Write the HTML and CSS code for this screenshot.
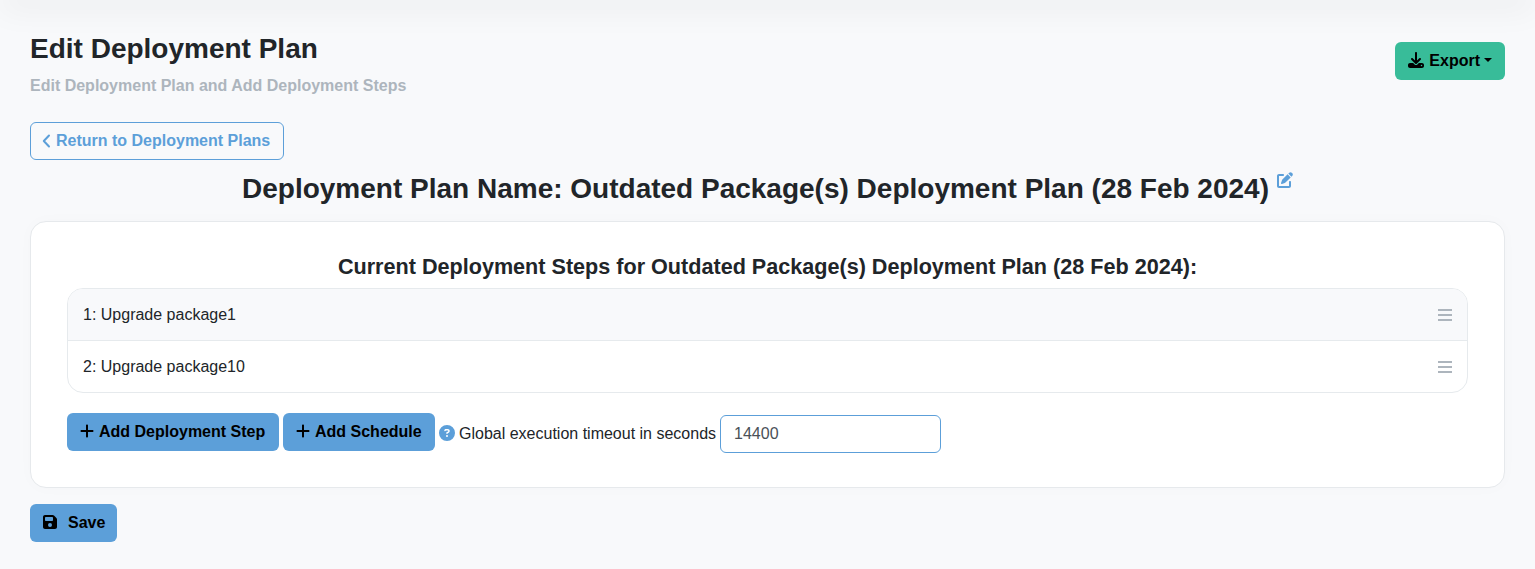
FILE: index.html
```html
<!DOCTYPE html>
<html lang="en">
<head>
<meta charset="utf-8">
<title>Edit Deployment Plan</title>
<link rel="stylesheet" href="styles.css">
</head>
<body>
<div class="topbar"></div>
<main class="page">
  <header class="page-header">
    <div>
      <h1 class="title">Edit Deployment Plan</h1>
      <p class="subtitle">Edit Deployment Plan and Add Deployment Steps</p>
    </div>
    <button class="btn btn-export">
      <svg class="icon icon-download" viewBox="0 0 512 512"><path d="M288 32c0-17.700-14.300-32-32-32s-32 14.300-32 32v242.700l-73.400-73.400c-12.500-12.500-32.800-12.500-45.300 0s-12.500 32.800 0 45.300l128 128c12.500 12.500 32.800 12.500 45.300 0l128-128c12.500-12.500 12.500-32.800 0-45.300s-32.800-12.500-45.300 0L288 274.700V32zM64 352c-35.300 0-64 28.700-64 64v32c0 35.300 28.700 64 64 64h384c35.300 0 64-28.700 64-64v-32c0-35.300-28.700-64-64-64H346.500l-45.300 45.300c-25 25-65.500 25-90.500 0L165.500 352H64zm368 56a24 24 0 1 1 0 48 24 24 0 1 1 0-48z"/></svg>
      <span>Export</span>
      <span class="caret"></span>
    </button>
  </header>
  <a class="btn btn-outline">
    <svg class="icon icon-chevron" viewBox="0 0 9 14"><path d="M7 1.500 1.800 7 7 12.500"/></svg>
    <span>Return to Deployment Plans</span>
  </a>
  <h2 class="plan-name">
    <span>Deployment Plan Name: Outdated Package(s) Deployment Plan (28 Feb 2024)</span>
    <svg class="icon icon-edit" viewBox="0 0 512 512"><path d="M471.600 21.700c-21.900-21.900-57.300-21.900-79.200 0L362.300 51.700l97.900 97.900 30.100-30.100c21.900-21.900 21.900-57.300 0-79.200L471.600 21.700zm-299.200 220c-6.100 6.100-10.800 13.600-13.500 21.900l-29.600 88.800c-2.900 8.600-.6 18.100 5.800 24.600s15.900 8.700 24.600 5.800l88.800-29.600c8.200-2.700 15.700-7.400 21.900-13.500L437.700 172.300 339.700 74.300 172.400 241.700zM64 64C28 64 0 92 0 128v320c0 36 28 64 64 64h320c36 0 64-28 64-64V320c0-17.700-14.300-32-32-32s-32 14.300-32 32v128H64V128h128c17.700 0 32-14.300 32-32s-14.300-32-32-32H64z"/></svg>
  </h2>
  <section class="card">
    <h3 class="steps-title">Current Deployment Steps for Outdated Package(s) Deployment Plan (28 Feb 2024):</h3>
    <ol class="steps">
      <li class="step step-shaded"><span>1: Upgrade package1</span><span class="handle"></span></li>
      <li class="step"><span>2: Upgrade package10</span><span class="handle"></span></li>
    </ol>
    <div class="actions">
      <button class="btn btn-primary btn-step">
        <svg class="icon icon-plus" viewBox="0 0 448 512"><path d="M256 80c0-17.700-14.300-32-32-32s-32 14.300-32 32v144H48c-17.700 0-32 14.300-32 32s14.300 32 32 32h144v144c0 17.700 14.300 32 32 32s32-14.300 32-32V288h144c17.700 0 32-14.300 32-32s-14.300-32-32-32H256V80z"/></svg>
        <span>Add Deployment Step</span>
      </button>
      <button class="btn btn-primary btn-schedule">
        <svg class="icon icon-plus" viewBox="0 0 448 512"><path d="M256 80c0-17.700-14.300-32-32-32s-32 14.300-32 32v144H48c-17.700 0-32 14.300-32 32s14.300 32 32 32h144v144c0 17.700 14.300 32 32 32s32-14.300 32-32V288h144c17.700 0 32-14.300 32-32s-14.300-32-32-32H256V80z"/></svg>
        <span>Add Schedule</span>
      </button>
      <label class="timeout">
        <svg class="icon icon-help" viewBox="0 0 512 512"><path d="M256 512A256 256 0 1 0 256 0a256 256 0 1 0 0 512zM169.800 165.300c7.900-22.300 29.100-37.300 52.800-37.300h58.300c34.900 0 63.100 28.300 63.100 63.100 0 22.600-12.100 43.500-31.700 54.800L280 264.400c-.2 13-10.900 23.600-24 23.600-13.300 0-24-10.700-24-24v-13.500c0-8.600 4.600-16.500 12.100-20.800l44.300-25.400c4.700-2.700 7.600-7.700 7.600-13.100 0-8.400-6.800-15.100-15.100-15.100h-58.300c-3.400 0-6.400 2.100-7.500 5.300l-.4 1.200c-4.400 12.500-18.200 19-30.600 14.600s-19-18.200-14.600-30.600l.4-1.200zM224 352a32 32 0 1 1 64 0 32 32 0 1 1-64 0z"/></svg>
        <span>Global execution timeout in seconds</span>
        <input class="input" type="text" value="14400">
      </label>
    </div>
  </section>
  <button class="btn btn-primary btn-save">
    <svg class="icon icon-save" viewBox="0 0 448 512"><path d="M64 32C28.700 32 0 60.700 0 96v320c0 35.300 28.700 64 64 64h320c35.300 0 64-28.700 64-64V173.300c0-17-6.700-33.300-18.700-45.300L352 50.700C340 38.700 323.700 32 306.700 32H64zm0 96c0-17.700 14.300-32 32-32h192c17.700 0 32 14.300 32 32v64c0 17.700-14.300 32-32 32H96c-17.700 0-32-14.300-32-32v-64zM224 288a64 64 0 1 1 0 128 64 64 0 1 1 0-128z"/></svg>
    <span>Save</span>
  </button>
</main>
</body>
</html>
```
FILE: styles.css
```css
* { box-sizing: border-box; }
body {
  margin: 0;
  height: 569px;
  overflow: hidden;
  background: #f8f9fb;
  color: #212529;
  font: 16px/24px "Liberation Sans", Arial, sans-serif;
}
h1, h2, h3, p, ol { margin: 0; padding: 0; }
.topbar {
  height: 16px;
  margin-top: -16px;
  box-shadow: 0 8px 32px rgba(0, 0, 0, .07);
}
.page { padding: 32px 30px 0; }
.page-header {
  display: flex;
  justify-content: space-between;
  align-items: flex-start;
  height: 90px;
}
.title { font-size: 28px; line-height: 34px; }
.subtitle { margin-top: 8px; color: #adb5bd; font-weight: bold; }
.icon { flex: none; fill: currentColor; display: block; }
.btn {
  display: inline-flex;
  align-items: center;
  height: 38px;
  padding: 0 12px 1px;
  border: 1px solid transparent;
  border-radius: 6px;
  font: bold 16px/24px "Liberation Sans", Arial, sans-serif;
  white-space: nowrap;
}
.btn-export { margin-top: 10px; background: #38bc99; color: #000; }
.icon-download { width: 16px; height: 16px; margin: 0 5px 1px 0; }
.caret {
  margin: 0 0 2px 4px;
  border: 4.800px solid transparent;
  border-top-color: #000;
  border-bottom: 0;
}
.btn-outline { display: flex; width: 254px; padding-left: 11px; border-color: #5c9fd9; color: #5c9fd9; }
.icon-chevron {
  width: 9px;
  height: 14px;
  margin-right: 5px;
  fill: none;
  stroke: currentColor;
  stroke-width: 2;
  stroke-linecap: round;
  stroke-linejoin: round;
}
.plan-name {
  display: flex;
  justify-content: center;
  height: 61px;
  padding-top: 12px;
  font-size: 28px;
  line-height: 34px;
}
.icon-edit { width: 16px; height: 16px; margin: 0 0 0 8px; color: #5c9fd9; }
.card {
  height: 267px;
  padding: 31px 36px;
  border: 1px solid #e6e9ec;
  border-radius: 16px;
  background: #fff;
  box-shadow: 0 0 16px rgba(0, 0, 0, .02);
}
.steps-title { font-size: 21.600px; line-height: 28px; text-align: center; }
.steps {
  margin-top: 7px;
  overflow: hidden;
  border: 1px solid #e6eaed;
  border-radius: 16px;
  list-style: none;
}
.step {
  display: flex;
  justify-content: space-between;
  align-items: center;
  height: 51px;
  padding: 0 15px;
}
.step-shaded { height: 52px; background: #f8f9fb; border-bottom: 1px solid #e6eaed; }
.handle {
  width: 14px;
  height: 12px;
  background: repeating-linear-gradient(#adb5bd 0 2px, transparent 2px 5px);
}
.actions { display: flex; gap: 4px; margin-top: 20px; }
.btn-primary { background: #5c9fd9; color: #000; }
.btn-step { width: 212px; }
.btn-schedule { width: 152px; }
.icon-plus { width: 14px; height: 16px; margin: 0 5px 1px 0; }
.timeout { display: flex; align-items: center; height: 38px; margin-top: 2px; }
.icon-help { width: 16px; height: 16px; margin: 0 4px 2px 0; color: #5c9fd9; }
.input {
  width: 221px;
  height: 38px;
  margin-left: 4px;
  padding: 0 13px;
  border: 1px solid #5c9fd9;
  border-radius: 6px;
  background: #fff;
  color: #495057;
  font: 16px/24px "Liberation Sans", Arial, sans-serif;
}
.btn-save { width: 87px; margin-top: 16px; }
.icon-save { width: 14px; height: 16px; margin: 0 11px 1px 0; }
```
